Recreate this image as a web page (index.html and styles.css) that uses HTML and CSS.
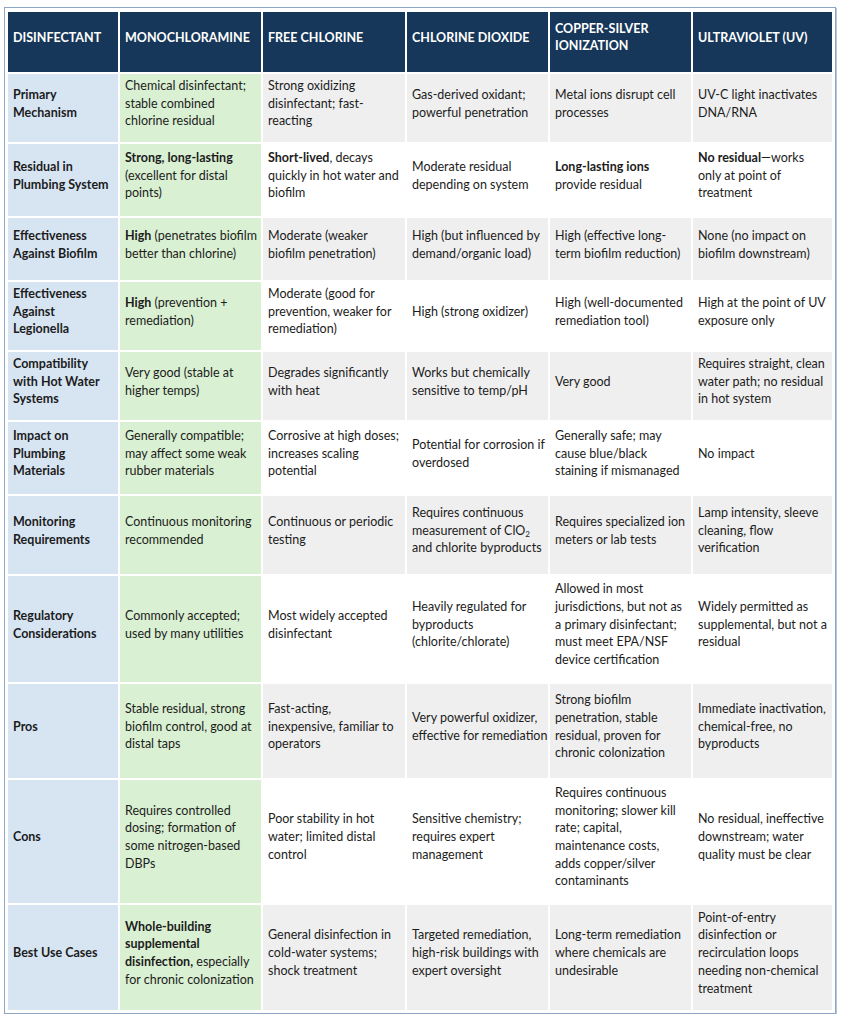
FILE: index.html
```html
<!DOCTYPE html>
<html lang="en">
<head>
<meta charset="utf-8">
<title>Disinfectant Comparison</title>
<link rel="stylesheet" href="styles.css">
</head>
<body>
<div class="frame">
  <div class="grid" role="table">
    <div class="row head" role="row">
      <div class="cell"><p>DISINFECTANT</p></div>
      <div class="cell"><p>MONOCHLORAMINE</p></div>
      <div class="cell"><p>FREE CHLORINE</p></div>
      <div class="cell"><p>CHLORINE DIOXIDE</p></div>
      <div class="cell"><p>COPPER-SILVER<br>IONIZATION</p></div>
      <div class="cell"><p>ULTRAVIOLET (UV)</p></div>
    </div>
    <div class="row odd" role="row">
      <div class="cell label"><p>Primary<br>Mechanism</p></div>
      <div class="cell mono"><p>Chemical disinfectant;<br>stable combined<br>chlorine residual</p></div>
      <div class="cell"><p>Strong oxidizing<br>disinfectant; fast-<br>reacting</p></div>
      <div class="cell"><p>Gas-derived oxidant;<br>powerful penetration</p></div>
      <div class="cell"><p>Metal ions disrupt cell<br>processes</p></div>
      <div class="cell"><p>UV-C light inactivates<br>DNA/RNA</p></div>
    </div>
    <div class="row" role="row">
      <div class="cell label"><p>Residual in<br>Plumbing System</p></div>
      <div class="cell mono"><p><b>Strong, long-lasting</b><br>(excellent for distal<br>points)</p></div>
      <div class="cell"><p><b>Short-lived</b>, decays<br>quickly in hot water and<br>biofilm</p></div>
      <div class="cell"><p>Moderate residual<br>depending on system</p></div>
      <div class="cell"><p><b>Long-lasting ions</b><br>provide residual</p></div>
      <div class="cell"><p><b>No residual</b>—works<br>only at point of<br>treatment</p></div>
    </div>
    <div class="row odd" role="row">
      <div class="cell label"><p>Effectiveness<br>Against Biofilm</p></div>
      <div class="cell mono"><p><b>High</b> (penetrates biofilm<br>better than chlorine)</p></div>
      <div class="cell"><p>Moderate (weaker<br>biofilm penetration)</p></div>
      <div class="cell"><p>High (but influenced by<br>demand/organic load)</p></div>
      <div class="cell"><p>High (effective long-<br>term biofilm reduction)</p></div>
      <div class="cell"><p>None (no impact on<br>biofilm downstream)</p></div>
    </div>
    <div class="row" role="row">
      <div class="cell label"><p>Effectiveness<br>Against<br>Legionella</p></div>
      <div class="cell mono"><p><b>High</b> (prevention +<br>remediation)</p></div>
      <div class="cell"><p>Moderate (good for<br>prevention, weaker for<br>remediation)</p></div>
      <div class="cell"><p>High (strong oxidizer)</p></div>
      <div class="cell"><p>High (well-documented<br>remediation tool)</p></div>
      <div class="cell"><p>High at the point of UV<br>exposure only</p></div>
    </div>
    <div class="row odd" role="row">
      <div class="cell label"><p>Compatibility<br>with Hot Water<br>Systems</p></div>
      <div class="cell mono"><p>Very good (stable at<br>higher temps)</p></div>
      <div class="cell"><p>Degrades significantly<br>with heat</p></div>
      <div class="cell"><p>Works but chemically<br>sensitive to temp/pH</p></div>
      <div class="cell"><p>Very good</p></div>
      <div class="cell"><p>Requires straight, clean<br>water path; no residual<br>in hot system</p></div>
    </div>
    <div class="row" role="row">
      <div class="cell label"><p>Impact on<br>Plumbing<br>Materials</p></div>
      <div class="cell mono"><p>Generally compatible;<br>may affect some weak<br>rubber materials</p></div>
      <div class="cell"><p>Corrosive at high doses;<br>increases scaling<br>potential</p></div>
      <div class="cell"><p>Potential for corrosion if<br>overdosed</p></div>
      <div class="cell"><p>Generally safe; may<br>cause blue/black<br>staining if mismanaged</p></div>
      <div class="cell"><p>No impact</p></div>
    </div>
    <div class="row odd" role="row">
      <div class="cell label"><p>Monitoring<br>Requirements</p></div>
      <div class="cell mono"><p>Continuous monitoring<br>recommended</p></div>
      <div class="cell"><p>Continuous or periodic<br>testing</p></div>
      <div class="cell"><p>Requires continuous<br>measurement of ClO<sub>2</sub><br>and chlorite byproducts</p></div>
      <div class="cell"><p>Requires specialized ion<br>meters or lab tests</p></div>
      <div class="cell"><p>Lamp intensity, sleeve<br>cleaning, flow<br>verification</p></div>
    </div>
    <div class="row" role="row">
      <div class="cell label"><p>Regulatory<br>Considerations</p></div>
      <div class="cell mono"><p>Commonly accepted;<br>used by many utilities</p></div>
      <div class="cell"><p>Most widely accepted<br>disinfectant</p></div>
      <div class="cell"><p>Heavily regulated for<br>byproducts<br>(chlorite/chlorate)</p></div>
      <div class="cell"><p>Allowed in most<br>jurisdictions, but not as<br>a primary disinfectant;<br>must meet EPA/NSF<br>device certification</p></div>
      <div class="cell"><p>Widely permitted as<br>supplemental, but not a<br>residual</p></div>
    </div>
    <div class="row odd" role="row">
      <div class="cell label"><p>Pros</p></div>
      <div class="cell mono"><p>Stable residual, strong<br>biofilm control, good at<br>distal taps</p></div>
      <div class="cell"><p>Fast-acting,<br>inexpensive, familiar to<br>operators</p></div>
      <div class="cell"><p>Very powerful oxidizer,<br>effective for remediation</p></div>
      <div class="cell"><p>Strong biofilm<br>penetration, stable<br>residual, proven for<br>chronic colonization</p></div>
      <div class="cell"><p>Immediate inactivation,<br>chemical-free, no<br>byproducts</p></div>
    </div>
    <div class="row" role="row">
      <div class="cell label"><p>Cons</p></div>
      <div class="cell mono"><p>Requires controlled<br>dosing; formation of<br>some nitrogen-based<br>DBPs</p></div>
      <div class="cell"><p>Poor stability in hot<br>water; limited distal<br>control</p></div>
      <div class="cell"><p>Sensitive chemistry;<br>requires expert<br>management</p></div>
      <div class="cell"><p>Requires continuous<br>monitoring; slower kill<br>rate; capital,<br>maintenance costs,<br>adds copper/silver<br>contaminants</p></div>
      <div class="cell"><p>No residual, ineffective<br>downstream; water<br>quality must be clear</p></div>
    </div>
    <div class="row odd" role="row">
      <div class="cell label"><p>Best Use Cases</p></div>
      <div class="cell mono"><p><b>Whole-building<br>supplemental<br>disinfection,</b> especially<br>for chronic colonization</p></div>
      <div class="cell"><p>General disinfection in<br>cold-water systems;<br>shock treatment</p></div>
      <div class="cell"><p>Targeted remediation,<br>high-risk buildings with<br>expert oversight</p></div>
      <div class="cell"><p>Long-term remediation<br>where chemicals are<br>undesirable</p></div>
      <div class="cell"><p>Point-of-entry<br>disinfection or<br>recirculation loops<br>needing non-chemical<br>treatment</p></div>
    </div>
  </div>
</div>
</body>
</html>
```

FILE: styles.css
```css
html, body {
  margin: 0;
  padding: 0;
  background: #ffffff;
}

body {
  font-family: Lato, "Liberation Sans", Arial, sans-serif;
  font-size: 12.5px;
  color: #1c1c1c;
}

.frame {
  box-sizing: border-box;
  width: 832px;
  margin: 7px 0 0 4px;
  padding: 4px 3px 3px 3px;
  border: 1px solid #8ea6c5;
  box-shadow: 1px 1px 0 #b5c5da;
  background: #ffffff;
}

.grid {
  display: grid;
  grid-template-columns: 110px 141px 142px 141px 141px 139px;
  grid-template-rows: 60px 68px 72px 62px 68px 68px 72px 78px 106px 94px 123px 105px;
  gap: 2px;
}

.row {
  display: contents;
}

.cell {
  display: flex;
  flex-direction: column;
  justify-content: center;
  padding: 0 4px 9px 5px;
  background: #ffffff;
  overflow: hidden;
}

.cell p {
  margin: 0;
  line-height: 17.7px;
  white-space: nowrap;
}

.cell b {
  font-weight: 700;
}

.row.odd .cell {
  background: #efefef;
}

.row .cell.label {
  background: #d7e5f3;
  font-weight: 700;
}

.row .cell.mono {
  background: #d9f0d2;
}

.row.head .cell {
  background: #163759;
  color: #ffffff;
  font-weight: 700;
  padding-bottom: 10px;
}

.row.head .cell p {
  line-height: 17px;
}

sub {
  font-size: 0.65em;
  line-height: 0;
  vertical-align: -0.25em;
}
```
